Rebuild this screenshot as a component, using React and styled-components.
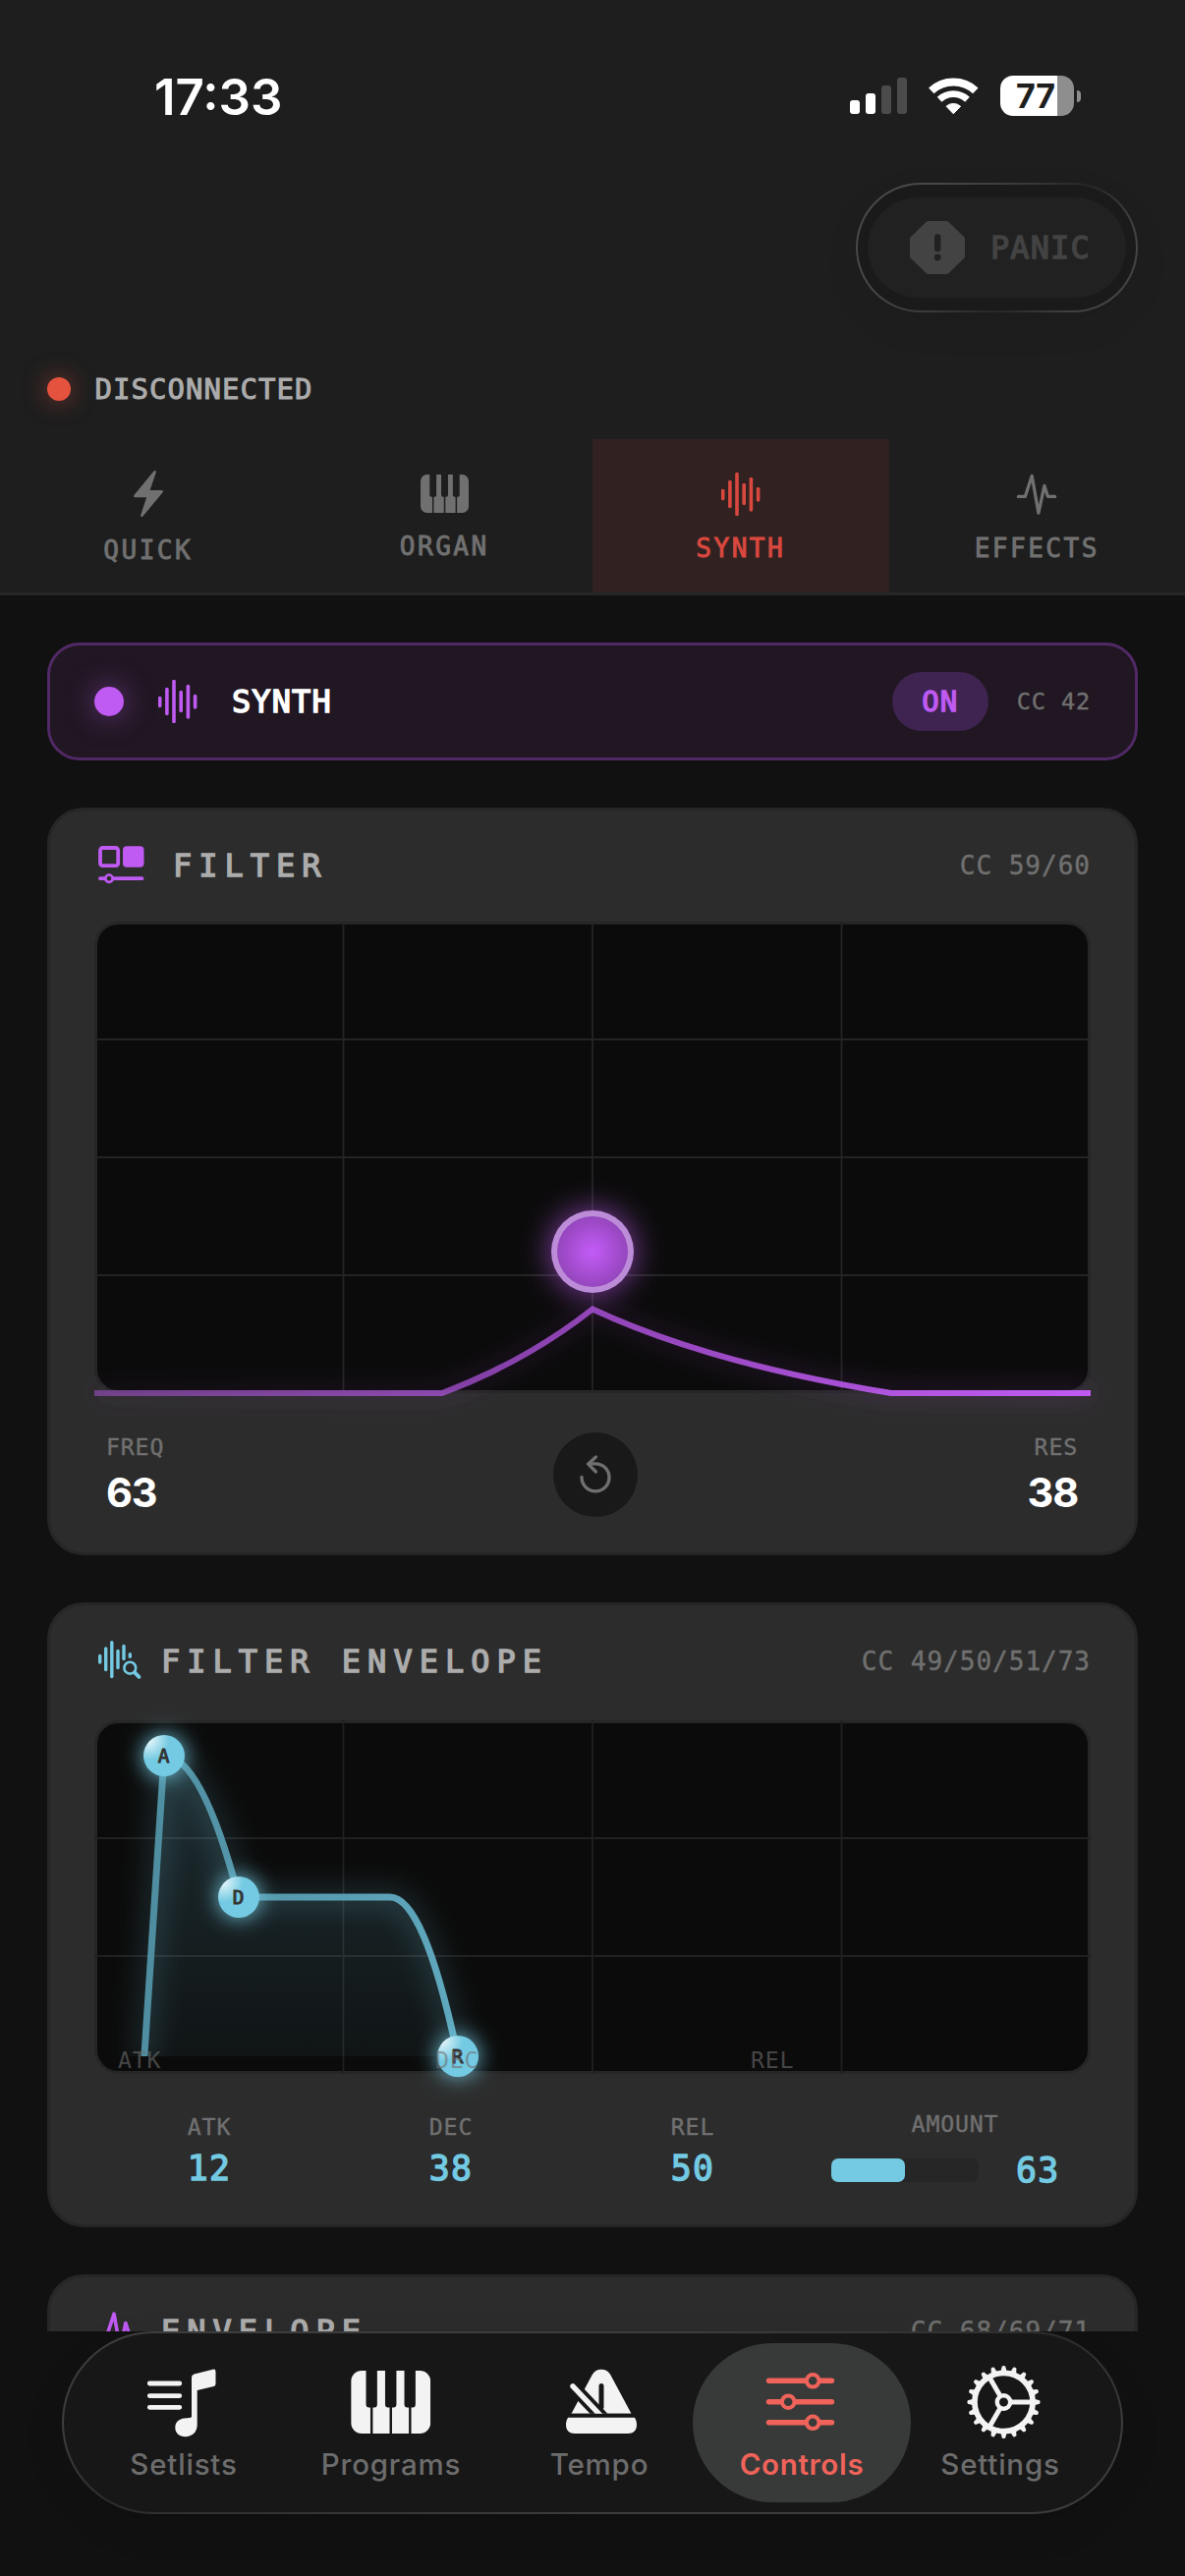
import React from 'react';
import styled, { createGlobalStyle, css } from 'styled-components';

const colors = {
  bg: '#111111',
  header: '#1e1e1e',
  card: '#2c2c2c',
  line: '#262626',
  plot: '#0b0b0b',
  muted: '#707070',
  title: '#acacac',
  purple: '#bf5af2',
  cyan: '#73cae2',
  red: '#d9483f',
};

// size in px, stroke thickens the regular cut to a medium / semibold look
const mono = (size, stroke = 0.4, spacing = 0) => css`
  font-family: 'DejaVu Sans Mono', 'Liberation Mono', monospace;
  font-size: ${size * 0.967}px;
  letter-spacing: ${size * 0.035 + spacing}px;
  -webkit-text-stroke: ${stroke}px currentColor;
  white-space: pre;
`;

const GlobalStyle = createGlobalStyle`
  * {
    box-sizing: border-box;
  }

  body {
    margin: 0;
    background: ${colors.bg};
    font-family: Inter, 'Liberation Sans', sans-serif;
  }

  svg {
    display: block;
    flex: none;
  }
`;

const Screen = styled.div`
  width: 1206px;
  height: 2622px;
  display: flex;
  flex-direction: column;
  overflow: hidden;
  background: ${colors.bg};
`;

const Header = styled.header`
  flex: none;
  height: 606px;
  background: ${colors.header};
  border-bottom: 3px solid ${colors.line};
`;

const StatusBar = styled.div`
  display: flex;
  align-items: center;
  height: 118px;
  padding: 77px 106px 0 157px;
`;

const Time = styled.div`
  flex: 1;
  padding-top: 1px;
  font-size: 51px;
  line-height: 41px;
  font-weight: 600;
  letter-spacing: 0;
  color: #fff;
`;

const StatusIcons = styled.div`
  display: flex;
  align-items: center;
  gap: 22px;
`;

const Battery = styled.div`
  display: flex;
  align-items: center;
  gap: 3px;

  &::after {
    content: '';
    width: 4px;
    height: 12px;
    border-radius: 0 4px 4px 0;
    background: #8e8e8e;
  }
`;

const BatteryBody = styled.div`
  width: 75px;
  height: 41px;
  padding-right: 3px;
  border-radius: 13px;
  background: linear-gradient(90deg, #fff 58px, #8e8e8e 58px);
  color: #1e1e1e;
  font-size: 34px;
  line-height: 41px;
  font-weight: 700;
  text-align: center;
`;

const Toolbar = styled.div`
  display: flex;
  justify-content: flex-end;
  padding: 68px 48px 0;
`;

const PanicRing = styled.div`
  width: 287px;
  height: 132px;
  padding: 13px 10px;
  border: 2px solid transparent;
  border-radius: 66px;
  background:
    linear-gradient(#1a1a1a, #1a1a1a) padding-box,
    linear-gradient(125deg, #484848 20%, #3a3a3a 45%, #262626 62%, #444 85%) border-box;
  box-shadow: 0 14px 40px rgba(0, 0, 0, 0.06);
`;

const PanicButton = styled.button`
  display: flex;
  align-items: center;
  gap: 26px;
  width: 263px;
  height: 102px;
  padding: 0 0 0 43px;
  border: none;
  border-radius: 51px;
  background: #212121;
  color: #434343;
  ${mono(33, 1.4)}
`;

const Connection = styled.div`
  display: flex;
  align-items: center;
  gap: 24.5px;
  height: 24px;
  margin-top: 66px;
  padding-left: 48px;
  color: ${colors.title};
  ${mono(30, 1)}
`;

const Dot = styled.span`
  flex: none;
  width: ${props => props.$size}px;
  height: ${props => props.$size}px;
  border-radius: 50%;
  background: ${props => props.$color};
  box-shadow: 0 0 ${props => props.$size}px ${props => props.$glow};
`;

const Tabs = styled.nav`
  display: grid;
  grid-template-columns: repeat(4, 1fr);
  height: 156px;
  margin-top: 39px;
`;

const Tab = styled.div`
  display: flex;
  flex-direction: column;
  align-items: center;
  justify-content: center;
  gap: 19.5px;
  padding-top: 3px;
  color: ${props => (props.$active ? colors.red : colors.muted)};
  background: ${props => (props.$active ? '#312221' : 'transparent')};
`;

const TabLabel = styled.span`
  line-height: 28px;
  ${mono(27, 0.9, 1.5)}
`;

const Content = styled.main`
  flex: 1;
  min-height: 0;
  display: flex;
  flex-direction: column;
  gap: 48px;
  padding: 48px 48px 0;
  overflow: hidden;
`;

const PowerRow = styled.div`
  flex: none;
  display: flex;
  align-items: center;
  height: 120px;
  padding: 0 45px;
  border: 3px solid #512966;
  border-radius: 33px;
  background: #201722;
  color: ${colors.purple};

  svg {
    margin: 0 35px;
  }
`;

const PowerTitle = styled.span`
  flex: 1;
  color: #fff;
  ${mono(33, 1.5)}
`;

const PowerBadge = styled.span`
  width: 98px;
  height: 60px;
  margin-right: 29px;
  border-radius: 30px;
  background: #3f2350;
  line-height: 60px;
  text-align: center;
  ${mono(30, 1.4)}
`;

const CcLabel = styled.span`
  color: ${colors.muted};
  ${props => mono(props.$size || 27)}
`;

const Card = styled.section`
  flex: none;
  height: ${props => props.$height}px;
  padding: 0 45px;
  border: 3px solid #262626;
  border-radius: 37px;
  background: ${colors.card};
`;

const CardHead = styled.div`
  display: flex;
  align-items: center;
  height: ${props => props.$height}px;
  padding-bottom: ${props => props.$lift || 2}px;
`;

const CardIcon = styled.div`
  width: ${props => props.$width}px;
  padding-left: 4px;
  padding-bottom: 1px;
  color: ${props => props.$color};
`;

const CardTitle = styled.h2`
  flex: 1;
  margin: 0;
  font-weight: 400;
  color: ${colors.title};
  ${mono(33, 1.4, 5.9)}
`;

const Plot = styled.svg`
  overflow: visible;
`;

const HandleLetter = styled.text`
  fill: #333;
  stroke: #333;
  text-anchor: middle;
  ${mono(20, 1)}
`;

const ZoneLabel = styled.text`
  fill: #6e6e6e;
  fill-opacity: 0.62;
  ${mono(24, 0)}
`;

const FilterReadout = styled.div`
  display: flex;
  justify-content: space-between;
  padding: 40px 13px 0 12px;
`;

const Stat = styled.div`
  display: flex;
  flex-direction: column;
  align-items: ${props => props.$align || 'center'};
`;

const StatLabel = styled.span`
  line-height: 30px;
  color: ${colors.muted};
  ${mono(24)}
`;

const StatValue = styled.span`
  margin-top: 8.5px;
  font-size: 41.5px;
  line-height: 44px;
  font-weight: 700;
  letter-spacing: -1.2px;
  color: #fff;
`;

const ResetButton = styled.button`
  display: flex;
  align-items: center;
  justify-content: center;
  width: 86px;
  height: 86px;
  padding: 0;
  border: none;
  border-radius: 50%;
  background: #191919;
  color: #707070;
`;

const EnvelopeReadout = styled.div`
  display: grid;
  grid-template-columns: 234px 234px 234px 1fr;
  column-gap: 12px;
  padding-top: 39px;
`;

const EnvValue = styled.span`
  line-height: 44px;
  color: ${colors.cyan};
  ${mono(36, 1.4)}
`;

const EnvStat = styled(Stat)`
  gap: 5px;
`;

const Amount = styled(Stat)`
  gap: 10px;
  margin-top: -3px;
`;

const AmountRow = styled.div`
  display: flex;
  align-items: center;
  gap: 38px;
  width: 100%;
  padding-left: 12px;
`;

const Track = styled.div`
  width: 150px;
  height: 24px;
  border-radius: 7px;
  background: #262626;
`;

const Fill = styled.div`
  height: 24px;
  border-radius: 7px;
  background: ${colors.cyan};
`;

const Footer = styled.footer`
  flex: none;
  height: 249px;
  padding: 0 63px;
  background: ${colors.bg};
`;

const NavBar = styled.nav`
  display: flex;
  height: 186px;
  padding: 10px 0 0 28px;
  border: 2px solid transparent;
  border-radius: 93px;
  background:
    linear-gradient(#171717, #171717) padding-box,
    linear-gradient(170deg, #3d3d3d 30%, #2c2c2c 50%, #3d3d3d 75%) border-box;
  box-shadow: 0 14px 40px rgba(0, 0, 0, 0.1);
`;

const NavItem = styled.div`
  display: flex;
  flex-direction: column;
  align-items: center;
  width: ${props => props.$width}px;
  height: 162px;
  padding-top: 18px;
  border-radius: 81px;
  background: ${props => (props.$active ? '#383a39' : 'transparent')};
  color: ${props => (props.$active ? '#f0635a' : '#f3f3f3')};
`;

const NavLabel = styled.span`
  margin-top: 1px;
  font-size: 29.5px;
  line-height: 40px;
  font-weight: ${props => (props.$active ? 600 : 500)};
  letter-spacing: ${props => (props.$active ? 0.7 : 0.8)}px;
  color: ${props => (props.$active ? '#f0635a' : '#6c6c6c')};
`;

const SignalIcon = () => (
  <svg width="58" height="37" viewBox="0 0 58 37">
    <rect x="0" y="23" width="10" height="14" rx="3" fill="#fff" />
    <rect x="16" y="16" width="10" height="21" rx="3" fill="#fff" />
    <rect x="32" y="8" width="10" height="29" rx="3" fill="#4b4b4b" />
    <rect x="48" y="0" width="10" height="37" rx="3" fill="#4b4b4b" />
  </svg>
);

const WifiIcon = () => (
  <svg width="51" height="38" viewBox="0 0 51 38" fill="none" stroke="#fff">
    <path d="M2.8 13.4 A33 33 0 0 1 47.8 13.4" strokeWidth="8" />
    <path d="M11.1 22.3 A20.8 20.8 0 0 1 39.5 22.3" strokeWidth="6.8" />
    <path d="M25.3 36.8 L18 29.2 A11 11 0 0 1 32.6 29.2 Z" fill="#fff" strokeWidth="1" strokeLinejoin="round" />
  </svg>
);

const PanicIcon = () => (
  <svg width="56" height="54" viewBox="0 0 56 54">
    <path
      d="M18.5 2.5 H37.5 L53.5 18 V36 L37.5 51.5 H18.5 L2.5 36 V18 Z"
      fill="currentColor"
      stroke="currentColor"
      strokeWidth="5"
      strokeLinejoin="round"
    />
    <rect x="25" y="13.3" width="6.4" height="18" rx="3" fill="#212121" />
    <circle cx="28.2" cy="37" r="3.4" fill="#212121" />
  </svg>
);

const BoltIcon = () => (
  <svg width="30" height="47" viewBox="0 0 30 47">
    <path
      d="M21.6 1.3 L14.8 21.3 H28.6 L8.4 45.7 L15 25.9 H1.4 Z"
      fill="currentColor"
      stroke="currentColor"
      strokeWidth="2.6"
      strokeLinejoin="round"
    />
  </svg>
);

const PianoIcon = ({ width, height, bg }) => (
  <svg width={width} height={height} viewBox="0 0 82 64" preserveAspectRatio="none">
    <rect x="0" y="0" width="82" height="64" rx="11" fill="currentColor" />
    <g fill={bg}>
      <path d="M15.5 0 H27 V34 Q27 37.5 24 37.5 H18.5 Q15.5 37.5 15.5 34 Z" />
      <path d="M35.2 0 H46.8 V34 Q46.8 37.5 43.8 37.5 H38.2 Q35.2 37.5 35.2 34 Z" />
      <path d="M55 0 H66.5 V34 Q66.5 37.5 63.5 37.5 H58 Q55 37.5 55 34 Z" />
      <rect x="20" y="36" width="2.5" height="28" />
      <rect x="39.8" y="36" width="2.5" height="28" />
      <rect x="59.6" y="36" width="2.5" height="28" />
    </g>
  </svg>
);

const waveBars = [
  [1.7, 18.5, 26.5],
  [8.9, 9.5, 34.5],
  [16, 1.6, 42.4],
  [23.2, 12.5, 31.5],
  [30.4, 6.5, 38],
  [37.6, 16.5, 28],
];

const WaveIcon = () => (
  <svg width="40" height="44" viewBox="0 0 40 44" stroke="currentColor" strokeWidth="3.6" strokeLinecap="round">
    {waveBars.map(([x, y1, y2]) => (
      <line key={x} x1={x} y1={y1} x2={x} y2={y2} />
    ))}
  </svg>
);

const PulseIcon = ({ width = 44, height = 46, weight = 3.4 }) => (
  <svg
    width={width}
    height={height}
    viewBox="0 0 44 46"
    fill="none"
    stroke="currentColor"
    strokeWidth={weight}
    strokeLinecap="round"
    strokeLinejoin="round"
  >
    <path d="M2.5 25.5 H9.8 L17 3.5 L24 43 L30.3 14 L34 25.5 H41.5" />
  </svg>
);

const FilterIcon = () => (
  <svg width="47" height="39" viewBox="0 0 47 39" fill="none" stroke="currentColor">
    <rect x="2" y="2" width="18.2" height="18.2" rx="2.5" strokeWidth="3.8" />
    <rect x="25" y="0.3" width="21.5" height="21.5" rx="4" fill="currentColor" stroke="none" />
    <path d="M2 33.2 H6.5 M15.5 33.2 H44.5" strokeWidth="3.8" strokeLinecap="round" />
    <circle cx="11" cy="33.2" r="3.7" strokeWidth="2.6" />
  </svg>
);

const envBars = [
  [5.7, 15.5, 22],
  [11.7, 8, 29.5],
  [17.8, 1.7, 36.5],
  [24, 10.5, 27.5],
  [30, 5.5, 18.5],
  [36.3, 13.7, 16.2],
];

const WaveSearchIcon = () => (
  <svg width="48" height="40" viewBox="4 0 48 40" fill="none" stroke="currentColor" strokeLinecap="round">
    {envBars.map(([x, y1, y2]) => (
      <line key={x} x1={x} y1={y1} x2={x} y2={y2} strokeWidth="3.4" />
    ))}
    <circle cx="36.3" cy="27.7" r="8.8" fill={colors.card} stroke="none" />
    <circle cx="36.3" cy="27.7" r="5.9" strokeWidth="2.6" />
    <path d="M41 32.4 L45.5 36.8" strokeWidth="3.8" />
  </svg>
);

const ResetIcon = () => (
  <svg
    width="34"
    height="40"
    viewBox="0 0 34 40"
    fill="none"
    stroke="currentColor"
    strokeWidth="3.3"
    strokeLinecap="round"
    strokeLinejoin="round"
  >
    <path d="M3 22.5 A14 14 0 1 0 17 8.8 H10" />
    <path d="M17.4 2 L9.6 9.2 L17.4 17" />
  </svg>
);

const SetlistIcon = () => (
  <svg width="84" height="84" viewBox="0 0 84 84">
    <path
      d="M7.3 23 H37.8 M7.3 35.6 H37.8 M7.3 47.3 H37.8"
      stroke="currentColor"
      strokeWidth="4.8"
      strokeLinecap="round"
    />
    <path
      d="M50 57 V16.8 Q50 14 52.6 13.4 L71.5 8.7 Q74.5 8 74.5 11 V23.5 Q74.5 25.6 72.4 26.1 L55.7 30 V65 C55.7 72.5 50.5 77.2 43.5 77.2 C37.5 77.2 33.3 73.5 33.3 68 C33.3 62 37.5 59.2 42.5 58.6 L48 57.9 Q50 57.6 50 57 Z"
      fill="currentColor"
    />
  </svg>
);

const ProgramsIcon = () => (
  <svg width="84" height="84" viewBox="-1.2 -10 84 84">
    <PianoIcon width="81" height="64" bg="#171717" />
  </svg>
);

const TempoIcon = () => (
  <svg width="84" height="84" viewBox="0 0 84 84">
    <clipPath id="tempo-body">
      <rect x="0" y="0" width="84" height="53.8" />
    </clipPath>
    <path
      d="M10.2 57.7 H77.8 C79.2 59.8 80 62 80 65 C80 71 76.5 74 71 74 H17 C11.5 74 8 71 8 65 C8 62 8.8 59.8 10.2 57.7 Z"
      fill="currentColor"
    />
    <g clipPath="url(#tempo-body)">
      <path d="M13.5 53.8 L34.8 14 Q37.8 8.7 44 8.7 Q50.2 8.7 53.2 14 L74.5 53.8 Z" fill="currentColor" />
      <path d="M44 25.5 V47" stroke="#171717" strokeWidth="5" strokeLinecap="round" />
      <path d="M12 22.7 L48 60.7" stroke="#171717" strokeWidth="13" />
      <path d="M15 25.8 L46 58.6" stroke="currentColor" strokeWidth="5.4" strokeLinecap="round" />
    </g>
  </svg>
);

const ControlsIcon = () => (
  <svg width="84" height="84" viewBox="0 0 84 84" stroke="currentColor">
    <path
      d="M8.5 20.3 H72.5 M8.5 41.7 H72.5 M8.5 62.8 H72.5"
      strokeWidth="5.4"
      strokeLinecap="round"
    />
    <g fill="#383a39" strokeWidth="4">
      <circle cx="53.2" cy="20.3" r="6.3" />
      <circle cx="28.2" cy="41.7" r="6.3" />
      <circle cx="53.2" cy="62.8" r="6.3" />
    </g>
  </svg>
);

const GearIcon = () => (
  <svg width="84" height="84" viewBox="-42 -42 84 84" fill="none" stroke="currentColor">
    <g transform="translate(3.5 0)">
      <circle r="29.6" strokeWidth="5.8" />
      {Array.from({ length: 20 }, (_, i) => (
        <path
          key={i}
          d="M30 -3.4 L36.6 -1.7 Q37.6 0 36.6 1.7 L30 3.4 Z"
          fill="currentColor"
          stroke="none"
          transform={`rotate(${i * 18})`}
        />
      ))}
      <circle r="6.7" strokeWidth="4.4" />
      {[0, 120, 240].map(a => (
        <line key={a} x1="8" y1="0" x2="28" y2="0" strokeWidth="5" transform={`rotate(${a})`} />
      ))}
    </g>
  </svg>
);

const GridLines = ({ height, color }) => (
  <g stroke={color} strokeWidth="1.8">
    {[253.5, 507, 760.5].map(x => (
      <line key={x} x1={x} y1="0" x2={x} y2={height} />
    ))}
    {Array.from({ length: height / 120 - 1 }, (_, i) => (
      <line key={i} x1="0" y1={(i + 1) * 120} x2="1014" y2={(i + 1) * 120} />
    ))}
  </g>
);

const FilterPlot = () => (
  <Plot width="1014" height="480" viewBox="0 0 1014 480">
    <defs>
      <linearGradient id="filter-line" gradientUnits="userSpaceOnUse" x1="0" y1="0" x2="1014" y2="0">
        <stop offset="0" stopColor={colors.purple} stopOpacity="0.45" />
        <stop offset="1" stopColor={colors.purple} />
      </linearGradient>
      <radialGradient id="filter-knob">
        <stop offset="0.1" stopColor={colors.purple} />
        <stop offset="1" stopColor="#9546bd" />
      </radialGradient>
      <filter id="filter-glow" filterUnits="userSpaceOnUse" x="-80" y="300" width="1180" height="260">
        <feDropShadow dx="0" dy="0" stdDeviation="13" floodColor={colors.purple} floodOpacity="0.4" />
      </filter>
      <filter id="knob-glow" x="-150%" y="-150%" width="400%" height="400%">
        <feDropShadow dx="0" dy="0" stdDeviation="16" floodColor={colors.purple} floodOpacity="0.7" />
      </filter>
    </defs>
    <rect x="1.5" y="1.5" width="1011" height="477" rx="23" fill={colors.plot} stroke={colors.line} strokeWidth="3" />
    <GridLines height={480} color="#242424" />
    <path
      d="M0 480 H354 Q439 448 507 394.5 Q626 450 811 480 H1014"
      fill="none"
      stroke="url(#filter-line)"
      strokeWidth="6"
      filter="url(#filter-glow)"
    />
    <g filter="url(#knob-glow)">
      <circle cx="507" cy="336" r="42" fill="#bc8cd9" />
      <circle cx="507" cy="336" r="36" fill="url(#filter-knob)" />
    </g>
  </Plot>
);

const handles = [
  { letter: 'A', x: 71, y: 36 },
  { letter: 'D', x: 147, y: 180 },
  { letter: 'R', x: 370, y: 342 },
];

const EnvelopePlot = () => (
  <Plot width="1014" height="360" viewBox="0 0 1014 360">
    <defs>
      <linearGradient id="env-area" x1="0" y1="0" x2="0" y2="1">
        <stop offset="0" stopColor={colors.cyan} stopOpacity="0.18" />
        <stop offset="1" stopColor={colors.cyan} stopOpacity="0.05" />
      </linearGradient>
      <linearGradient id="env-line" gradientUnits="userSpaceOnUse" x1="50" y1="0" x2="370" y2="0">
        <stop offset="0" stopColor="#4f8da0" />
        <stop offset="1" stopColor="#5fa8be" />
      </linearGradient>
      <radialGradient id="env-handle" cx="0.12" cy="0.12" r="0.5">
        <stop offset="0" stopColor="#eaf8fc" />
        <stop offset="1" stopColor={colors.cyan} />
      </radialGradient>
      <clipPath id="env-clip">
        <rect x="-60" y="-60" width="1100" height="402" />
      </clipPath>
      <filter id="env-glow" filterUnits="userSpaceOnUse" x="-60" y="-60" width="560" height="500">
        <feDropShadow dx="0" dy="0" stdDeviation="14" floodColor={colors.cyan} floodOpacity="0.5" />
      </filter>
      <filter id="handle-glow" x="-150%" y="-150%" width="400%" height="400%">
        <feDropShadow dx="0" dy="0" stdDeviation="11" floodColor={colors.cyan} floodOpacity="0.95" />
      </filter>
    </defs>
    <rect x="1.5" y="1.5" width="1011" height="357" rx="23" fill={colors.plot} stroke={colors.line} strokeWidth="3" />
    <GridLines height={360} color="#202020" />
    <path d="M51 342 L71 36 Q109 36 147 180 H301 Q335.5 180 370 342 Z" fill="url(#env-area)" />
    <g clipPath="url(#env-clip)">
      <path
        d="M50.5 348 L71 36 Q109 36 147 180 H301 Q335.5 180 370 342"
        fill="none"
        stroke="url(#env-line)"
        strokeWidth="7"
        filter="url(#env-glow)"
      />
    </g>
    {handles.map(h => (
      <g key={h.letter}>
        <circle cx={h.x} cy={h.y} r="21" fill="url(#env-handle)" filter="url(#handle-glow)" />
        <HandleLetter x={h.x} y={h.y + 7}>
          {h.letter}
        </HandleLetter>
      </g>
    ))}
    <ZoneLabel x="24" y="354">ATK</ZoneLabel>
    <ZoneLabel x="347" y="354">DEC</ZoneLabel>
    <ZoneLabel x="668" y="354">REL</ZoneLabel>
  </Plot>
);

const tabs = [
  { label: 'QUICK', icon: <BoltIcon /> },
  { label: 'ORGAN', icon: <PianoIcon width={49} height={39} bg={colors.header} /> },
  { label: 'SYNTH', icon: <WaveIcon />, active: true },
  { label: 'EFFECTS', icon: <PulseIcon height={44} /> },
];

const navItems = [
  { label: 'Setlists', icon: <SetlistIcon />, width: 188 },
  { label: 'Programs', icon: <ProgramsIcon />, width: 234 },
  { label: 'Tempo', icon: <TempoIcon />, width: 190 },
  { label: 'Controls', icon: <ControlsIcon />, width: 222, active: true },
  { label: 'Settings', icon: <GearIcon />, width: 182 },
];

const envelope = [
  { label: 'ATK', value: 12 },
  { label: 'DEC', value: 38 },
  { label: 'REL', value: 50 },
];

const amount = 63;

export default function App() {
  return (
    <>
      <GlobalStyle />
      <Screen>
        <Header>
          <StatusBar>
            <Time>17:33</Time>
            <StatusIcons>
              <SignalIcon />
              <WifiIcon />
              <Battery>
                <BatteryBody>77</BatteryBody>
              </Battery>
            </StatusIcons>
          </StatusBar>
          <Toolbar>
            <PanicRing>
              <PanicButton>
                <PanicIcon />
                PANIC
              </PanicButton>
            </PanicRing>
          </Toolbar>
          <Connection>
            <Dot $size={24} $color="#e5533f" $glow="rgba(229, 83, 63, 0.5)" />
            DISCONNECTED
          </Connection>
          <Tabs>
            {tabs.map(tab => (
              <Tab key={tab.label} $active={tab.active}>
                {tab.icon}
                <TabLabel>{tab.label}</TabLabel>
              </Tab>
            ))}
          </Tabs>
        </Header>

        <Content>
          <PowerRow>
            <Dot $size={30} $color={colors.purple} $glow="rgba(191, 90, 242, 0.5)" />
            <WaveIcon />
            <PowerTitle>SYNTH</PowerTitle>
            <PowerBadge>ON</PowerBadge>
            <CcLabel $size={24.4}>CC 42</CcLabel>
          </PowerRow>

          <Card $height={761}>
            <CardHead $height={113}>
              <CardIcon $color={colors.purple} $width={80}>
                <FilterIcon />
              </CardIcon>
              <CardTitle>FILTER</CardTitle>
              <CcLabel>CC 59/60</CcLabel>
            </CardHead>
            <FilterPlot />
            <FilterReadout>
              <Stat $align="flex-start">
                <StatLabel>FREQ</StatLabel>
                <StatValue>63</StatValue>
              </Stat>
              <ResetButton>
                <ResetIcon />
              </ResetButton>
              <Stat $align="flex-end">
                <StatLabel>RES</StatLabel>
                <StatValue>38</StatValue>
              </Stat>
            </FilterReadout>
          </Card>

          <Card $height={636}>
            <CardHead $height={117} $lift={4}>
              <CardIcon $color={colors.cyan} $width={68}>
                <WaveSearchIcon />
              </CardIcon>
              <CardTitle>FILTER ENVELOPE</CardTitle>
              <CcLabel>CC 49/50/51/73</CcLabel>
            </CardHead>
            <EnvelopePlot />
            <EnvelopeReadout>
              {envelope.map(item => (
                <EnvStat key={item.label}>
                  <StatLabel>{item.label}</StatLabel>
                  <EnvValue>{item.value}</EnvValue>
                </EnvStat>
              ))}
              <Amount>
                <StatLabel>AMOUNT</StatLabel>
                <AmountRow>
                  <Track>
                    <Fill style={{ width: `${Math.round((amount / 127) * 100)}%` }} />
                  </Track>
                  <EnvValue>{amount}</EnvValue>
                </AmountRow>
              </Amount>
            </EnvelopeReadout>
          </Card>

          <Card $height={636}>
            <CardHead $height={113} $lift={4}>
              <CardIcon $color={colors.purple} $width={68}>
                <PulseIcon width={41} height={41} weight={4} />
              </CardIcon>
              <CardTitle>ENVELOPE</CardTitle>
              <CcLabel>CC 68/69/71</CcLabel>
            </CardHead>
          </Card>
        </Content>

        <Footer>
          <NavBar>
            {navItems.map(item => (
              <NavItem key={item.label} $width={item.width} $active={item.active}>
                {item.icon}
                <NavLabel $active={item.active}>{item.label}</NavLabel>
              </NavItem>
            ))}
          </NavBar>
        </Footer>
      </Screen>
    </>
  );
}
